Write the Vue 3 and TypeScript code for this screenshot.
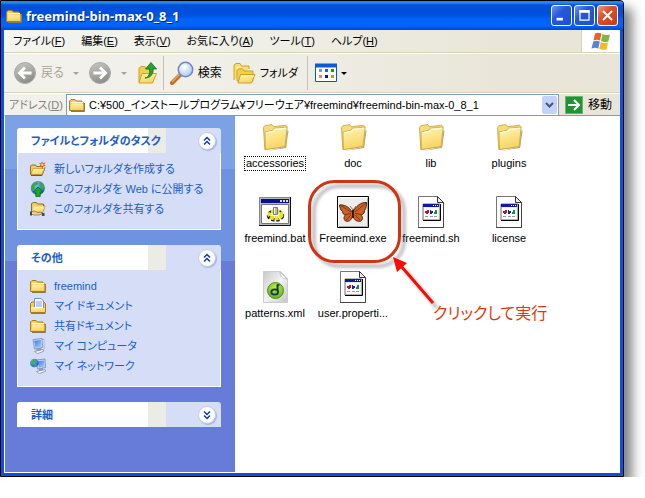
<script setup lang="ts">
import { ref } from 'vue'

interface MenuItem { label: string; key: string }
interface TaskLink { label: string; icon: string }
interface TaskPanel { title: string; open: boolean; links: TaskLink[] }
interface FileItem { name: string; icon: string }

const folderName = 'freemind-bin-max-0_8_1'
const address = ref('C:¥500_インストールプログラム¥フリーウェア¥freemind¥freemind-bin-max-0_8_1')
const selected = ref('accessories')

const menus: MenuItem[] = [
  { label: 'ファイル', key: 'F' },
  { label: '編集', key: 'E' },
  { label: '表示', key: 'V' },
  { label: 'お気に入り', key: 'A' },
  { label: 'ツール', key: 'T' },
  { label: 'ヘルプ', key: 'H' },
]

const panels = ref<TaskPanel[]>([
  {
    title: 'ファイルとフォルダのタスク',
    open: true,
    links: [
      { label: '新しいフォルダを作成する', icon: 'new-folder' },
      { label: 'このフォルダを Web に公開する', icon: 'publish' },
      { label: 'このフォルダを共有する', icon: 'share' },
    ],
  },
  {
    title: 'その他',
    open: true,
    links: [
      { label: 'freemind', icon: 'folder-small' },
      { label: 'マイ ドキュメント', icon: 'documents' },
      { label: '共有ドキュメント', icon: 'folder-small' },
      { label: 'マイ コンピュータ', icon: 'computer' },
      { label: 'マイ ネットワーク', icon: 'network' },
    ],
  },
  { title: '詳細', open: false, links: [] },
])

const files: FileItem[] = [
  { name: 'accessories', icon: 'folder' },
  { name: 'doc', icon: 'folder' },
  { name: 'lib', icon: 'folder' },
  { name: 'plugins', icon: 'folder' },
  { name: 'freemind.bat', icon: 'batch' },
  { name: 'Freemind.exe', icon: 'butterfly' },
  { name: 'freemind.sh', icon: 'script' },
  { name: 'license', icon: 'script' },
  { name: 'patterns.xml', icon: 'xml' },
  { name: 'user.properti...', icon: 'script' },
]
</script>

<template>
  <svg class="defs" aria-hidden="true">
    <defs>
      <linearGradient id="g-folder" x1="0" y1="0" x2="0.3" y2="1">
        <stop offset="0" stop-color="#fff6b4" /><stop offset="1" stop-color="#f8d564" />
      </linearGradient>
      <linearGradient id="g-grey" x1="0" y1="0" x2="0.4" y2="1">
        <stop offset="0" stop-color="#c9c9c6" /><stop offset="1" stop-color="#8f8f8c" />
      </linearGradient>
      <linearGradient id="g-page" x1="0" y1="0" x2="1" y2="1">
        <stop offset="0" stop-color="#c8c8c8" /><stop offset="0.5" stop-color="#f4f4f4" /><stop offset="1" stop-color="#c4c4c4" />
      </linearGradient>
      <radialGradient id="g-lens" cx="0.4" cy="0.35" r="0.7">
        <stop offset="0" stop-color="#ffffff" /><stop offset="1" stop-color="#a5c6f2" />
      </radialGradient>
      <radialGradient id="g-globe" cx="0.35" cy="0.3" r="0.8">
        <stop offset="0" stop-color="#7fc0f5" /><stop offset="1" stop-color="#1450b0" />
      </radialGradient>
      <radialGradient id="g-green" cx="0.5" cy="0.35" r="0.7">
        <stop offset="0" stop-color="#c5f04c" /><stop offset="1" stop-color="#5faa1c" />
      </radialGradient>
      <linearGradient id="g-screen" x1="0" y1="0" x2="1" y2="1">
        <stop offset="0" stop-color="#3c7be0" /><stop offset="1" stop-color="#a8ccfb" />
      </linearGradient>

      <symbol id="folder-small" viewBox="0 0 16 16">
        <path d="M2 14.5h13.5V6" fill="none" stroke="#8a7a52" />
        <path d="M.5 13.500V4L2 2.500h4L7.500 4H13v2h2v7.500z" fill="#f4cc5c" stroke="#ad7d1c" />
        <path d="M2.500 6.500H14v6H1.500z" fill="url(#g-folder)" />
        <path d="M2 5.500h12" stroke="#fffbe0" />
      </symbol>
      <symbol id="new-folder" viewBox="0 0 16 16">
        <path d="M1 14.500h11l3-8" fill="none" stroke="#695a3c" />
        <path d="M.5 13.500V5l1-1h4l1 1.500h6v8z" fill="#f4cc5c" stroke="#9a6b1a" />
        <path d="M3 7.500h11.500l-2.500 6H1z" fill="url(#g-folder)" stroke="#bd8a28" stroke-width=".6" />
        <path d="M12 0l.8 2 2.700-.6-1.300 2L16 5l-2.600.3L12.500 8l-1-2.500L9 6l1.500-2L9 2l2.200.2z" fill="#f05a28" />
        <circle cx="12.300" cy="3.800" r="1.300" fill="#ffd84c" />
      </symbol>
      <symbol id="publish" viewBox="0 0 16 16">
        <circle cx="7.800" cy="7" r="7" fill="url(#g-globe)" />
        <path d="M1 6c1-3 3-5 6-5l1 2-3 2-1 3-2 2zM10 1c3 1 4 3 4.500 6l-2 2-1-3-2-1z" fill="#3da83c" />
        <path d="M8 6l5 5h-2.800v4.500H5.800V11H3z" fill="#18a82c" stroke="#087018" stroke-width=".8" />
      </symbol>
      <symbol id="share" viewBox="0 0 16 16">
        <path d="M1.500 10V2.500l2-1h3l1 1.500h6V5H15l-2.500 6.500H2z" fill="#f4cc5c" stroke="#8d6f2d" />
        <path d="M4 5.500h11l-2.500 5.500H2z" fill="url(#g-folder)" />
        <path d="M1 11l3-1 4 1.500 3-.5 1 2-3 1H4l-3-1z" fill="#f3cfa0" stroke="#8a6638" stroke-width=".7" />
        <path d="M0 10.500h2v4H0zM12 12h2.500v3H12z" fill="#404a58" />
      </symbol>
      <symbol id="documents" viewBox="0 0 16 16">
        <path d="M.5 14.500v-9L2 4h12l1.500 2v8.500z" fill="#f4cc5c" stroke="#ad7d1c" />
        <path d="M4.500.5H11L13.500 3v9h-9z" fill="#fff" stroke="#678fd0" />
        <path d="M6 4h6M6 6h6M6 8h6" stroke="#75a0e0" />
        <path d="M1 9h4l1 1h9v4H1z" fill="url(#g-folder)" />
        <path d="M1 15.500h14.500" stroke="#8a7a52" />
      </symbol>
      <symbol id="computer" viewBox="0 0 16 16">
        <path d="M11.500 1.500l2.500-.5v10.500l-3 2z" fill="#eef1f8" stroke="#8493b5" stroke-width=".6" />
        <path d="M3 1.500l9-1 .8 9L4.500 11z" fill="#c6d8f6" stroke="#6d8ac4" stroke-width=".8" />
        <path d="M4.300 2.800l6.500-.7.700 6.300-6 1z" fill="url(#g-screen)" />
        <path d="M6 10.700l5-.9.500 2.700-4.500 1z" fill="#8c9ec6" />
        <path d="M4.500 13.500l8.500-2 .8 1.700-6.300 2.500z" fill="#f3f5fa" stroke="#77839e" stroke-width=".7" />
      </symbol>
      <symbol id="network" viewBox="0 0 16 16">
        <path d="M6 2l9-1 .5 8.500L7.500 11z" fill="#c6d8f6" stroke="#6d8ac4" stroke-width=".8" />
        <path d="M7.500 3.300l6.500-.8.400 6-5.600.9z" fill="url(#g-screen)" />
        <path d="M8.500 10.700l4.500-.9.500 2.700-4 1z" fill="#8c9ec6" />
        <path d="M6.500 13.500l8.500-2 .7 1.700-6.300 2.500z" fill="#f3f5fa" stroke="#77839e" stroke-width=".7" />
        <circle cx="4.300" cy="5" r="4.300" fill="url(#g-globe)" />
        <path d="M1 4l3-3 2 1-2 3-2 2zM5 6l2 1-1 2H4z" fill="#38b34a" />
      </symbol>

      <symbol id="folder" viewBox="0 0 32 32">
        <path d="M7 30l20-3 2.500-17-1-1L26 26z" fill="#777" opacity=".65" />
        <path d="M4.500 6.500L6 4.500l7-.8 1.500 2 12-1.400 1.300 1.200-1 20-21 3z" fill="#f6dc7c" stroke="#d2ae4e" />
        <path d="M6 11l8-1.800 1.500-2L28.200 6 26 25.500 6.500 28.500z" fill="url(#g-folder)" stroke="#c9a02f" stroke-width=".7" />
        <path d="M7 12l8-1.800 1-1.800L27 7.300" fill="none" stroke="#fffce0" stroke-width="1.300" />
      </symbol>
      <symbol id="batch" viewBox="0 0 32 32">
        <path d="M0 1h32v29H0z" fill="#b8b8b8" />
        <path d="M.5 29V1.500H31" fill="none" stroke="#888" />
        <path d="M0 29.500h31.500V1" fill="none" stroke="#111" />
        <path d="M2 3h28v4H2z" fill="#08108c" />
        <path d="M21 4h2v2h-2zM24 4h2v2h-2zM27 4h2v2h-2z" fill="#ddd" />
        <path d="M2.500 8.500h27v19h-27z" fill="#fff" stroke="#777" />
        <ellipse cx="16.500" cy="19.500" rx="6.500" ry="4" fill="none" stroke="#222" stroke-width="4.500" stroke-dasharray="3 1.500" />
        <ellipse cx="16.500" cy="18.800" rx="6" ry="3.500" fill="#fff" stroke="#ece414" stroke-width="4" stroke-dasharray="3.500 1" />
        <path d="M14.500 11.500h4v7h-4z" fill="#b8b8b8" stroke="#666" stroke-width=".8" />
        <path d="M15.500 12v6" stroke="#fff" />
      </symbol>
      <symbol id="butterfly" viewBox="0 0 32 32">
        <path d="M.5.500h31v31H.5z" fill="#eeede8" stroke="#000" />
        <path d="M1.500 30V1.500H30" fill="none" stroke="#fff" />
        <path d="M2 30.500h28.500V2" fill="none" stroke="#aaa" />
        <path d="M15.500 16.500C12 10.500 7 8.500 2.500 9c.5 3 1 5 3 6.500 0 2 1 3 3 3.500-2 2-2 4 0 6 3 1 6-.5 7-5 2 4.500 5 6 8.500 5 2-2 2-4 0-6 3-1 3.500-2.500 3.500-4.500 2-2.500 2-6 2-8C24 6 19 10 15.500 16.500z" fill="#cd6024" stroke="#4a2412" />
        <path d="M3 9l11 7M29 7L18 16M8 18.500l6-1M24 18.500l-6-1M9 24l5-5M23 24l-5-5" fill="none" stroke="#6a3214" stroke-width=".8" />
        <path d="M16 14v8" stroke="#2d150c" stroke-width="1.800" />
        <path d="M16 14l-3-4M16 14l3-4" stroke="#4a2818" stroke-width=".6" />
      </symbol>
      <symbol id="script" viewBox="0 0 32 32">
        <path d="M3.500.5h19l6 6v25h-25z" fill="#fff" stroke="#777" />
        <path d="M28.500 7v24.500H3" fill="none" stroke="#444" />
        <path d="M22.500.5v6h6z" fill="#eee" stroke="#333" />
        <path d="M8 8h17v16H8z" fill="#ececea" stroke="#777" />
        <path d="M8 24.500h17.500V8" fill="none" stroke="#000" />
        <path d="M8 8h16v3H8z" fill="#101b9c" />
        <path d="M18 9h1v1h-1zM20 9h1v1h-1zM22 9h1v1h-1z" fill="#fff" />
        <path d="M9 12h14v11H9z" fill="#fff" />
        <path d="M10 15h2v-1h2v3h-1v1h-2v-1h-1z" fill="#c41220" />
        <path d="M15 14h1v1h2v2h-1v1h-2z" fill="#1720c0" />
        <path d="M19 18v-2h1v-2h2v4z" fill="#099441" />
        <path d="M10 20.500h3M15 20.500h3M19 20.500h3" stroke="#999" />
      </symbol>
      <symbol id="xml" viewBox="0 0 32 32">
        <path d="M4.500.5h17l7 7v24h-24z" fill="url(#g-page)" stroke="#ccc" />
        <path d="M21 1c0 4 2 7 7 7z" fill="#fff" stroke="#aaa" stroke-width=".6" />
        <circle cx="16.500" cy="19.500" r="8" fill="url(#g-green)" stroke="#4f9415" />
        <path d="M18.500 13.500v7.500" stroke="#123b49" stroke-width="2" />
        <ellipse cx="15.700" cy="21" rx="3.400" ry="2.700" fill="#8fd030" stroke="#123b49" stroke-width="1.800" />
        <path d="M18 14h2.500" stroke="#123b49" stroke-width="1.500" />
      </symbol>
    </defs>
  </svg>

  <div class="window">
    <header class="titlebar">
      <svg class="icon16"><use href="#folder-small" /></svg>
      <h1>{{ folderName }}</h1>
      <div class="controls">
        <button type="button" aria-label="最小化">
          <svg viewBox="0 0 21 21"><path d="M5 14.500h7" stroke="#fff" stroke-width="3" /></svg>
        </button>
        <button type="button" aria-label="最大化">
          <svg viewBox="0 0 21 21"><path d="M5.500 5.500h10v10h-10z" fill="none" stroke="#fff" stroke-width="1.400" /><path d="M5 6h11" stroke="#fff" stroke-width="3" /></svg>
        </button>
        <button type="button" class="close" aria-label="閉じる">
          <svg viewBox="0 0 21 21"><path d="M5.500 5.500l10 10M15.500 5.500l-10 10" stroke="#fff" stroke-width="2.200" /></svg>
        </button>
      </div>
    </header>

    <nav class="menubar">
      <button v-for="m in menus" :key="m.key" type="button">{{ m.label }}(<u>{{ m.key }}</u>)</button>
      <div class="flag">
        <svg viewBox="0 0 20 19">
          <path d="M4 1.500C6 .3 8 .5 10.500 1.500L9 8.500C7 7.500 5 7.500 2.500 8.500z" fill="#e8602c" />
          <path d="M11.500 2c2 1 4 1.500 7.500.5L17.300 9.500c-2.300 1-4.500.8-7.300-.5z" fill="#7db73c" />
          <path d="M2.300 9.500c2-1 4-1 6.500 0L7.300 16.500C5 15.500 3 15.500.5 16.500z" fill="#5684d8" />
          <path d="M9.800 10c2.200 1.200 4.500 1.500 7.200.5l-1.500 6.700c-2.500 1-4.800.8-7.300-.4z" fill="#f3bb22" />
        </svg>
      </div>
    </nav>

    <div class="toolbar">
      <button type="button" class="tool disabled">
        <svg class="icon24" viewBox="0 0 24 24"><circle cx="12" cy="12" r="10.500" fill="url(#g-grey)" stroke="#aaa" /><path d="M18.500 12H7M12 6.500L6.500 12l5.500 5.500" fill="none" stroke="#fff" stroke-width="2.800" /></svg>
        <span>戻る</span>
      </button>
      <button type="button" class="drop disabled" aria-label="戻る履歴"></button>
      <button type="button" class="tool disabled" aria-label="進む">
        <svg class="icon24" viewBox="0 0 24 24"><circle cx="12" cy="12" r="10.500" fill="url(#g-grey)" stroke="#aaa" /><path d="M5.500 12H17M12 6.500l5.500 5.500-5.500 5.500" fill="none" stroke="#fff" stroke-width="2.800" /></svg>
      </button>
      <button type="button" class="drop disabled" aria-label="進む履歴"></button>
      <button type="button" class="tool" aria-label="上へ">
        <svg class="icon24" viewBox="0 0 24 24">
          <path d="M3 21V7l2-1.500h4L10.500 8H17v12z" fill="#f3cf4f" stroke="#d0a325" />
          <path d="M6 12.500h14.500l-4 9.500H3z" fill="url(#g-folder)" stroke="#d0a325" />
          <path d="M9 17c4-1 5-4 4.500-9H9.500L15 1.500 20.500 8H17c0 5-2 9-8 9z" fill="#25a32d" stroke="#107019" stroke-width=".8" />
        </svg>
      </button>
      <span class="sep"></span>
      <button type="button" class="tool">
        <svg class="icon24" viewBox="0 0 24 24">
          <path d="M2 22l8-8" stroke="#c56824" stroke-width="4" stroke-linecap="round" />
          <path d="M2 21l8-8" stroke="#f5a55b" stroke-width="1.500" />
          <circle cx="15.500" cy="8.500" r="7.200" fill="url(#g-lens)" stroke="#7386c4" stroke-width="1.500" />
          <path d="M12 5l3-1.500 2 2-3 2z" fill="#fff" />
        </svg>
        <span>検索</span>
      </button>
      <button type="button" class="tool folders">
        <svg class="icon24" viewBox="0 0 24 24">
          <path d="M2 19V4l2-1.500h4L9.500 5H17v3" fill="#f7dd6c" stroke="#cfa12a" />
          <path d="M5 8V6h4" fill="none" stroke="#fff8c4" />
          <path d="M5 20V9.500L6.500 8h4L12 10h9v10z" fill="#f3cf4f" stroke="#cfa12a" />
          <path d="M8.500 13.500h14.500L19.500 22H6z" fill="url(#g-folder)" stroke="#cfa12a" />
        </svg>
        <span>フォルダ</span>
      </button>
      <span class="sep"></span>
      <button type="button" class="tool views" aria-label="表示">
        <svg class="icon24" viewBox="0 0 24 24">
          <path d="M1.500 3.500h21v17h-21z" fill="#fff" stroke="#0855c4" />
          <path d="M1 4.500h22" stroke="#0a5ad8" stroke-width="4" />
          <path d="M5 8h3v3H5z" fill="#9191b8" /><path d="M11 8h3v3h-3z" fill="#1a67f0" /><path d="M17 8h3v3h-3z" fill="#129a1a" />
          <path d="M5 14h3v3H5z" fill="#fb8045" /><path d="M11 14h3v3h-3z" fill="#0a1b98" /><path d="M17 14h3v3h-3z" fill="#c89b18" />
        </svg>
        <i class="caret"></i>
      </button>
    </div>

    <form class="addressbar" @submit.prevent>
      <label for="address">アドレス(<u>D</u>)</label>
      <div class="combo">
        <svg class="icon16"><use href="#folder-small" /></svg>
        <input id="address" v-model="address" type="text" spellcheck="false" />
        <button type="button" aria-label="アドレス一覧">
          <svg viewBox="0 0 9 6"><path d="M1 1l3.500 3.500L8 1" fill="none" stroke="#42567d" stroke-width="2" /></svg>
        </button>
      </div>
      <button type="submit" class="go">
        <svg viewBox="0 0 18 18"><path d="M.5.500h17v17H.5z" fill="#219332" stroke="#65b672" /><path d="M3 9h11M9 4l5 5-5 5" fill="none" stroke="#fff" stroke-width="2" /></svg>
        <span>移動</span>
      </button>
    </form>

    <div class="body">
      <aside class="sidebar">
        <section v-for="p in panels" :key="p.title" class="panel">
          <header>
            <h2>{{ p.title }}</h2>
            <button type="button" :aria-expanded="p.open" :aria-label="p.title" @click="p.open = !p.open">
              <svg viewBox="0 0 16 16" :class="{ down: !p.open }"><path d="M5 7.500l3-3 3 3M5 11.500l3-3 3 3" fill="none" stroke="#123c9c" stroke-width="1.500" /></svg>
            </button>
          </header>
          <ul v-if="p.open && p.links.length">
            <li v-for="l in p.links" :key="l.label">
              <a href="#"><svg class="icon16"><use :href="'#' + l.icon" /></svg>{{ l.label }}</a>
            </li>
          </ul>
        </section>
      </aside>

      <main class="files">
        <div class="grid">
          <button
            v-for="f in files"
            :key="f.name"
            type="button"
            class="file"
            :class="{ selected: f.name === selected }"
            @click="selected = f.name"
          >
            <svg class="icon32"><use :href="'#' + f.icon" /></svg>
            <span>{{ f.name }}</span>
          </button>
        </div>
        <svg class="callout" viewBox="0 0 240 200" aria-hidden="true">
          <defs>
            <filter id="soft" x="-20%" y="-20%" width="150%" height="150%"><feGaussianBlur stdDeviation="1.500" /></filter>
          </defs>
          <g filter="url(#soft)" opacity=".4">
            <rect x="79" y="70" width="90" height="80" rx="25" fill="none" stroke="#667" stroke-width="4" />
            <path d="M202 192L171 155" stroke="#667" stroke-width="4" />
          </g>
          <rect x="74.500" y="65.500" width="90" height="80" rx="25" fill="none" stroke="#cf3510" stroke-width="3" />
          <path d="M198 187L166 150" stroke="#f80d05" stroke-width="3" />
          <path d="M158 141l14 6-10 9z" fill="#f80d05" />
        </svg>
        <p class="note">クリックして実行</p>
      </main>
    </div>
  </div>
</template>

<style>
body {
  margin: 0;
  background: #fff;
}
</style>

<style scoped>
.defs {
  position: absolute;
  width: 0;
  height: 0;
}
.window {
  box-sizing: border-box;
  display: flex;
  flex-direction: column;
  min-height: calc(100vh - 21px);
  margin-right: 21px;
  padding: 0 3px 3px;
  border: 1px solid #000;
  border-top-right-radius: 4px;
  background: #0a50e4;
  box-shadow: 8px 8px 12px rgba(0, 0, 0, 0.5);
  color: #000;
  font-family: "Liberation Sans", "Noto Sans CJK JP", sans-serif;
  font-size: 11px;
  font-feature-settings: "palt";
  line-height: 20px;
}
button {
  margin: 0;
  padding: 0;
  border: 0;
  background: none;
  color: inherit;
  font: inherit;
  font-feature-settings: inherit;
  white-space: nowrap;
}
svg {
  display: block;
  flex: none;
}
.icon16 {
  width: 16px;
  height: 16px;
}
.icon24 {
  width: 24px;
  height: 24px;
}
.icon32 {
  width: 32px;
  height: 32px;
}

.titlebar {
  display: flex;
  align-items: center;
  gap: 4px;
  height: 29px;
  margin: 0 -3px;
  padding: 0 5px;
  border-top-right-radius: 3px;
  background: linear-gradient(#2a83f5 0 2px, #0050dd 4px 14px, #0063fa 18px 25px, #0047c9);
}
.titlebar h1 {
  flex: 1;
  margin: 0;
  color: #fff;
  font-family: "Noto Sans", "Noto Sans CJK JP", sans-serif;
  font-size: 13px;
  text-shadow: 1px 1px 0 #06287c;
}
.controls {
  display: flex;
  gap: 2px;
}
.controls button {
  box-sizing: border-box;
  width: 21px;
  height: 21px;
  border: 1px solid #fff;
  border-radius: 3px;
  background: linear-gradient(135deg, #6f97f2, #2756d8 40%, #1d4fd4);
}
.controls .close {
  background: linear-gradient(135deg, #f09a7c, #dd4f26 40%, #cc3b12);
}
.controls svg {
  width: 19px;
  height: 19px;
}

.menubar {
  display: flex;
  gap: 16px;
  height: 22px;
  padding-left: 9px;
  border-bottom: 1px solid #d8d2bd;
  background: linear-gradient(90deg, #f4f4f0, #efeee6 45%, #e9e6d9 80%);
}
.flag {
  display: grid;
  place-items: center;
  width: 38px;
  margin-left: auto;
  border-left: 1px solid #d8d2bd;
  background: #fff;
}
.flag svg {
  width: 20px;
  height: 19px;
}

.toolbar {
  display: flex;
  align-items: center;
  height: 38px;
  padding-left: 9px;
  border-top: 1px solid #fff;
  border-bottom: 1px solid #d8d2bd;
  background: linear-gradient(90deg, #f2f1ec, #efeee6 45%, #e9e6d9 80%);
}
.tool {
  display: flex;
  align-items: center;
  gap: 4px;
  font-size: 12px;
}
.disabled {
  color: #a7a594;
}
.drop {
  width: 24px;
  height: 24px;
}
.drop::before,
.caret {
  display: block;
  width: 0;
  margin: 0 auto;
  border: 3px solid transparent;
  border-top-color: currentColor;
  border-bottom: 0;
  content: "";
}
.sep {
  width: 1px;
  height: 34px;
  margin: 0 6px 0 3px;
  background: #c5c2b8;
}
.folders {
  margin: 0 6px 0 10px;
  font-size: 11px;
}
.views {
  gap: 3px;
}

.addressbar {
  display: flex;
  align-items: center;
  height: 21px;
  padding: 0 8px 0 5px;
  border-top: 1px solid #fff;
  background: linear-gradient(90deg, #f2f1ec, #efeee6 45%, #e9e6d9 80%);
}
.addressbar label {
  width: 57px;
  color: #85837a;
  white-space: nowrap;
}
.combo {
  box-sizing: border-box;
  display: flex;
  flex: 1;
  align-items: center;
  gap: 4px;
  height: 21px;
  padding: 1px 1px 1px 2px;
  border: 1px solid #7f9db9;
  border-bottom: 0;
  background: #fff;
}
.combo input {
  flex: 1;
  min-width: 0;
  height: 18px;
  padding: 0;
  border: 0;
  outline: 0;
  background: none;
  color: #000;
  font: inherit;
  font-feature-settings: inherit;
}
.combo button {
  display: grid;
  place-items: center;
  width: 15px;
  height: 18px;
  border-radius: 2px;
  background: #c3d3f8;
}
.combo button svg {
  width: 9px;
  height: 6px;
}
.go {
  display: flex;
  align-items: center;
  gap: 5px;
  margin-left: 6px;
  font-size: 12px;
}
.go svg {
  width: 18px;
  height: 18px;
}

.body {
  display: flex;
  flex: 1;
  border: solid #fff;
  border-width: 1px 0 1px 1px;
  border-top-color: #7f9db9;
  background: #fff;
}
.sidebar {
  box-sizing: border-box;
  display: flex;
  flex: none;
  flex-direction: column;
  gap: 15px;
  width: 230px;
  padding: 12px 14px 12px 12px;
  background: linear-gradient(#7ba1e7 53px, #7093e1 53px 145px, #677bd8 145px);
}
.panel header {
  display: flex;
  align-items: center;
  justify-content: space-between;
  height: 25px;
  padding: 0 5px 0 14px;
  border-radius: 3px 3px 0 0;
  background: linear-gradient(90deg, #fff 64%, #ecece6 64% 73%, #d5def6 73%);
}
.panel h2 {
  margin: 0;
  color: #215dc6;
  font-size: 11px;
  white-space: nowrap;
}
.panel header button {
  width: 18px;
  height: 18px;
  border: 1px solid #c3cce0;
  border-radius: 9px;
  background: #fff;
  box-shadow: 1px 1px 1px #9db6e4;
}
.panel header button svg {
  width: 16px;
  height: 16px;
}
.down {
  transform: rotate(180deg);
}
.panel ul {
  margin: 0;
  padding: 6px 0 10px 12px;
  border: 1px solid #fff;
  border-top: 0;
  background: #d5def6;
  list-style: none;
}
.panel a {
  display: flex;
  align-items: center;
  gap: 8px;
  color: #215dc6;
  text-decoration: none;
  white-space: nowrap;
}

.files {
  position: relative;
  flex: 1;
  min-width: 0;
}
.grid {
  display: grid;
  grid-template-columns: repeat(auto-fill, 78px);
  grid-auto-rows: 75px;
  padding: 5px 1px;
}
.file {
  display: flex;
  flex-direction: column;
  align-items: center;
  gap: 3px;
}
.file span {
  padding: 0 1px;
  border: 1px solid transparent;
  line-height: 13px;
}
.file.selected span {
  border: 1px dotted #000;
}
.callout {
  position: absolute;
  top: 0;
  left: 0;
  width: 240px;
  height: 200px;
  pointer-events: none;
}
.note {
  position: absolute;
  top: 188px;
  left: 198px;
  margin: 0;
  color: #e03a0c;
  font-size: 16px;
  white-space: nowrap;
}
</style>
